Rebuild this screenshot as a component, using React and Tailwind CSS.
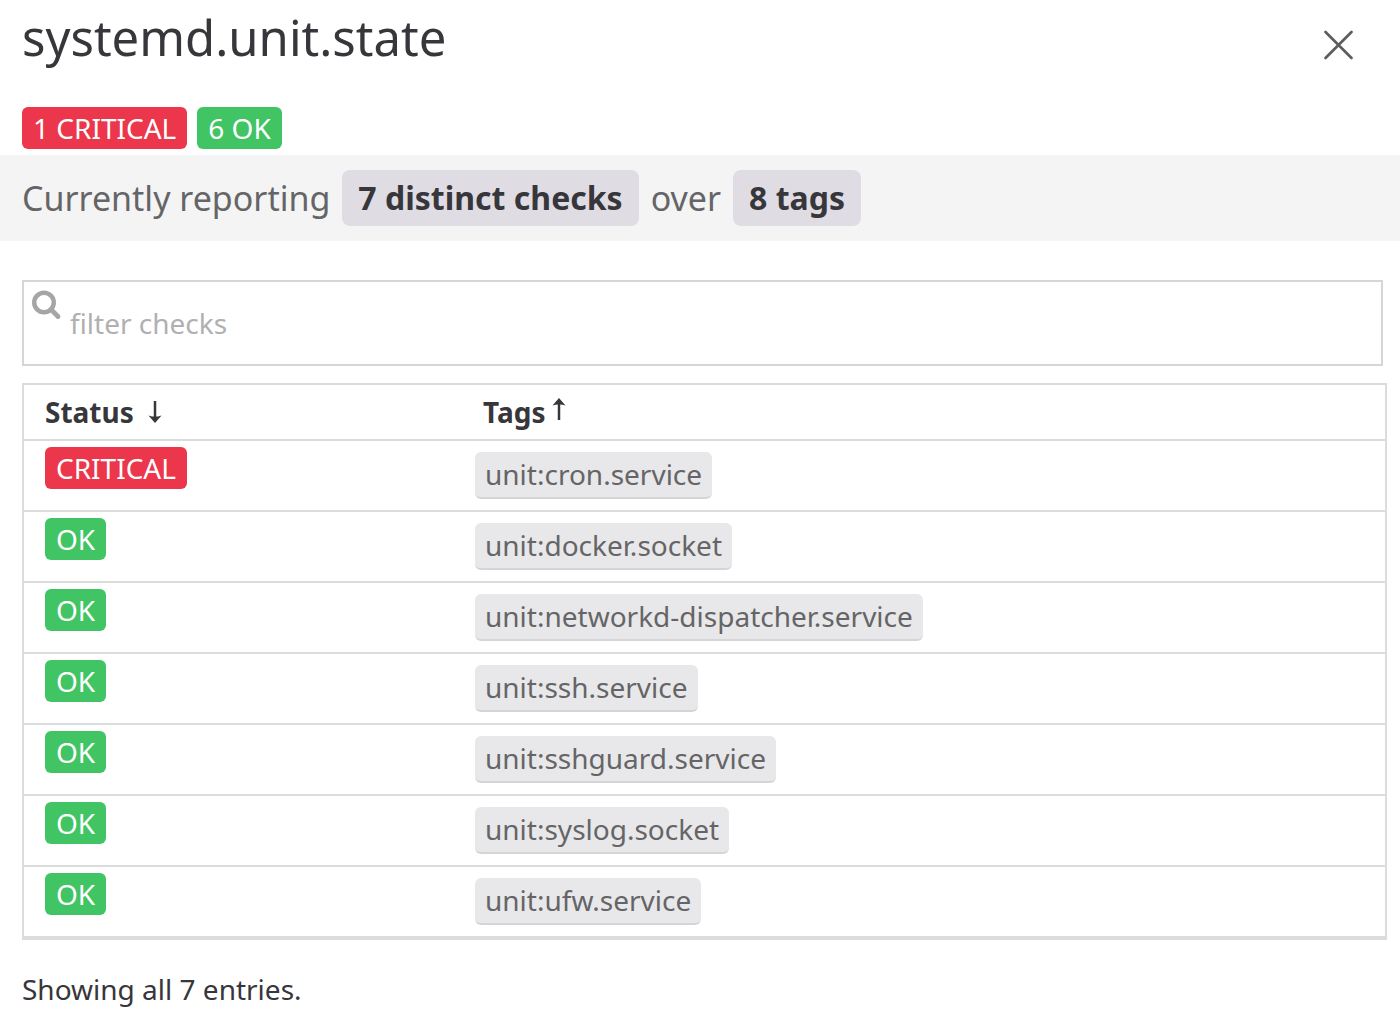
import { useState } from "react";

const checks = [
  { status: "CRITICAL", tag: "unit:cron.service" },
  { status: "OK", tag: "unit:docker.socket" },
  { status: "OK", tag: "unit:networkd-dispatcher.service" },
  { status: "OK", tag: "unit:ssh.service" },
  { status: "OK", tag: "unit:sshguard.service" },
  { status: "OK", tag: "unit:syslog.socket" },
  { status: "OK", tag: "unit:ufw.service" },
];

function StatusBadge({ status, children }) {
  const color = status === "CRITICAL" ? "bg-[#eb364b]" : "bg-[#41c464]";

  return (
    <span className={`block w-fit rounded-md px-[11px] text-[28px] leading-[42px] text-white ${color}`}>
      {children}
    </span>
  );
}

function Arrow({ up }) {
  return (
    <svg viewBox="0 0 14 24" className="h-6 w-[14px]" aria-hidden="true">
      <g transform={up ? "rotate(180 7 12)" : undefined}>
        <path d="M7 1V18" fill="none" stroke="#37363b" strokeWidth="2.500" />
        <path d="M0.500 15.500C3 16.500 5 16.500 7 16.500C9 16.500 11 16.500 13.500 15.500L7 23Z" fill="#37363b" />
      </g>
    </svg>
  );
}

export default function App() {
  const [filter, setFilter] = useState("");
  const rows = checks.filter((check) => check.tag.includes(filter));

  return (
    <main className="bg-white pb-5 font-['Noto_Sans',sans-serif] text-[28px] text-[#37363b]">
      <header className="flex items-start justify-between pr-[46px] pl-[22px]">
        <h1 className="text-[49px] leading-[75px]">systemd.unit.state</h1>
        <button type="button" aria-label="Close" className="mt-[30px]">
          <svg viewBox="0 0 30 30" className="size-[30px]" aria-hidden="true">
            <path
              d="M1.500 2L27.500 28M27.500 2L1.500 28"
              fill="none"
              stroke="#5c5c5e"
              strokeWidth="2.600"
              strokeLinecap="round"
            />
          </svg>
        </button>
      </header>

      <div className="mt-8 flex gap-[10px] px-[22px] pb-[6px]">
        <StatusBadge status="CRITICAL">1 CRITICAL</StatusBadge>
        <StatusBadge status="OK">6 OK</StatusBadge>
      </div>

      <section className="flex items-center gap-3 bg-[#f4f4f4] px-[22px] py-[15px] text-[34px] leading-[56px] text-[#656567]">
        <span>Currently reporting</span>
        <strong className="rounded-lg bg-[#dfdde3] px-4 text-[32px] font-bold text-[#37363b]">
          7 distinct checks
        </strong>
        <span>over</span>
        <strong className="rounded-lg bg-[#dfdde3] px-4 text-[32px] font-bold text-[#37363b]">
          8 tags
        </strong>
      </section>

      <label className="mt-[39px] mr-[17px] ml-[22px] flex items-start border-2 border-[#d6d6d7] pl-2">
        <svg viewBox="0 0 30 30" className="mt-2 size-[30px]" aria-hidden="true">
          <circle cx="12" cy="12.500" r="9.800" fill="none" stroke="#a5a5a6" strokeWidth="4.400" />
          <path d="M19 19.500L26 26.500" stroke="#a5a5a6" strokeWidth="4.800" strokeLinecap="round" />
        </svg>
        <input
          type="text"
          aria-label="filter checks"
          placeholder="filter checks"
          value={filter}
          onChange={(e) => setFilter(e.target.value)}
          className="h-[82px] min-w-0 flex-1 px-2 outline-none placeholder:text-[#b0b0b3]"
        />
      </label>

      <div className="mt-[17px] mr-[13px] ml-[22px] border-2 border-[#dcdcdd]">
        <table className="w-full table-fixed border-separate border-spacing-0">
          <thead>
            <tr className="text-left leading-[54px]">
              <th className="w-[438px] border-b-2 border-[#dcdcdd] pl-[21px] font-bold">
                <button type="button" className="flex items-center gap-[14px]">
                  Status <Arrow />
                </button>
              </th>
              <th className="border-b-2 border-[#dcdcdd] pl-[21px] font-bold">
                <button type="button" className="flex items-start gap-[7px]">
                  Tags
                  <span className="pt-3">
                    <Arrow up />
                  </span>
                </button>
              </th>
            </tr>
          </thead>
          <tbody>
            {rows.map((check) => (
              <tr key={check.tag} className="align-top">
                <td className="border-b-2 border-[#dcdcdd] pt-[6px] pl-[21px]">
                  <StatusBadge status={check.status}>{check.status}</StatusBadge>
                </td>
                <td className="border-b-2 border-[#dcdcdd] pt-[11px] pb-[11px] pl-[13px]">
                  <span className="block w-fit rounded-md border-b-2 border-[#d5d5d7] bg-[#e8e8ea] px-[10px] leading-[45px] text-[#656567]">
                    {check.tag}
                  </span>
                </td>
              </tr>
            ))}
          </tbody>
        </table>
      </div>

      <p className="mt-7 px-[22px] leading-[42px]">
        Showing all {rows.length} entries.
      </p>
    </main>
  );
}
